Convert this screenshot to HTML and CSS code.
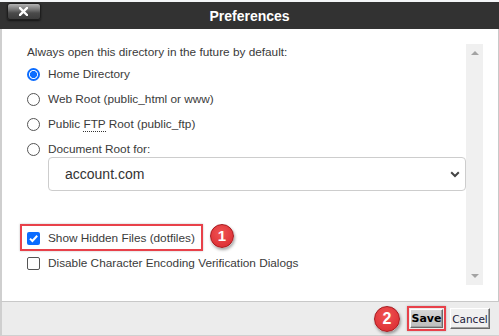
FILE: index.html
```html
<!DOCTYPE html>
<html>
<head>
<meta charset="utf-8">
<link rel="stylesheet" href="styles.css">
</head>
<body>
<div class="topstrip"></div>
<div class="dialog">
  <header class="titlebar">
    <div class="tb-left">
      <button class="close" aria-label="Close">
        <svg width="9" height="9" viewBox="0 0 9 9"><path d="M1 1 L8 8 M8 1 L1 8" stroke="#fff" stroke-width="2.4" stroke-linecap="square"/></svg>
      </button>
    </div>
    <h1 class="title">Preferences</h1>
    <div></div>
  </header>
  <div class="body">
    <div class="scroll">
      <p class="intro">Always open this directory in the future by default:</p>
      <label class="opt"><span class="radio checked"></span><span>Home Directory</span></label>
      <label class="opt"><span class="radio"></span><span>Web Root (public_html or www)</span></label>
      <label class="opt"><span class="radio"></span><span>Public <abbr class="ftp">FTP</abbr> Root (public_ftp)</span></label>
      <label class="opt"><span class="radio"></span><span>Document Root for:</span></label>
      <div class="select">
        <span>account.com</span>
        <svg class="chev" width="10" height="7" viewBox="0 0 10 7"><path d="M1.2 1.3 L5 5 L8.8 1.3" fill="none" stroke="#444" stroke-width="2"/></svg>
      </div>
      <label class="chk first">
        <span class="box checked">
          <svg width="13" height="13" viewBox="0 0 13 13"><path d="M3 6.6 L5.4 9 L10.2 3.8" fill="none" stroke="#fff" stroke-width="2"/></svg>
        </span><span>Show Hidden Files (dotfiles)</span>
        <span class="mark"></span>
        <span class="badge b1">1</span>
      </label>
      <label class="chk"><span class="box"></span><span>Disable Character Encoding Verification Dialogs</span></label>
    </div>
    <div class="scrollbar">
      <span class="arrow up"></span>
      <span class="arrow down"></span>
    </div>
  </div>
  <footer class="footer">
    <span class="badge b2">2</span>
    <span class="savewrap"><button class="btn save">Save</button></span>
    <button class="btn cancel">Cancel</button>
  </footer>
</div>
</body>
</html>
```

FILE: styles.css
```css
html, body {
  margin: 0;
  padding: 0;
  background: #fff;
}
body {
  width: 499px;
  height: 336px;
  overflow: hidden;
  font-family: "Liberation Sans", Arial, sans-serif;
}
.topstrip {
  height: 2px;
  background: #f4f6f8;
}
.dialog {
  width: 499px;
}
.titlebar {
  height: 27px;
  background: #323232;
  display: grid;
  grid-template-columns: 1fr auto 1fr;
  align-items: center;
}
.tb-left {
  align-self: start;
  padding-left: 7px;
  padding-top: 1px;
}
.close {
  width: 34px;
  height: 17px;
  padding: 0;
  border: 1px solid #1e1e1e;
  border-radius: 3px;
  background: linear-gradient(#b4b4b4 0%, #7a7a7a 35%, #4a4a4a 60%, #3c3c3c 100%);
  box-shadow: 0 1px 2px rgba(0,0,0,0.6);
  display: flex;
  align-items: center;
  justify-content: center;
}
.close svg { display: block; margin-left: -2px; margin-top: -1px; }
.title {
  margin: 0;
  color: #fff;
  font-size: 14px;
  font-weight: bold;
  line-height: 16px;
}
.body {
  height: 272px;
  box-sizing: border-box;
  border-left: 2px solid #cfcfcf;
  border-right: 1px solid #c8c8c8;
  padding: 15px 15px 16px 25px;
  display: flex;
}
.scroll {
  flex: 1;
  display: flex;
  flex-direction: column;
  align-items: flex-start;
  color: #3a3a3a;
  font-size: 11.8px;
}
.intro {
  margin: 0 0 6px;
  line-height: 16px;
}
.opt {
  display: flex;
  align-items: center;
  height: 16px;
  margin-bottom: 9px;
  line-height: 16px;
}
.radio {
  width: 13px;
  height: 13px;
  box-sizing: border-box;
  border: 1px solid #555;
  border-radius: 50%;
  margin-right: 8px;
  background: #fff;
}
.radio.checked {
  border: 2px solid #0b6cff;
  background: radial-gradient(circle, #0b6cff 0 3.3px, #fff 3.8px);
}
.ftp {
  text-decoration: none;
  border-bottom: 1px dotted #333;
  line-height: 12px;
}
.select {
  margin: -9px 0 0 21px;
  width: 418px;
  height: 34px;
  box-sizing: border-box;
  border: 1px solid #cdcdcd;
  border-radius: 4px;
  display: flex;
  align-items: center;
  justify-content: space-between;
  padding: 0 5px 0 16px;
  font-size: 14px;
  color: #333;
}
.chev { display: block; }
.chk {
  position: relative;
  display: flex;
  align-items: center;
  height: 16px;
  line-height: 16px;
  margin-top: 9px;
}
.chk.first { margin-top: 39px; }
.box {
  width: 13px;
  height: 13px;
  box-sizing: border-box;
  border: 1px solid #555;
  border-radius: 2px;
  margin-right: 8px;
  background: #fff;
}
.box.checked {
  border: none;
  background: #0b6cff;
}
.box svg { display: block; }
.mark {
  position: absolute;
  left: -7px;
  top: -6px;
  width: 183px;
  height: 27px;
  box-sizing: border-box;
  border: 2px solid #e8414a;
  box-shadow: 0 0 2px rgba(0,0,0,0.25);
}
.badge {
  display: flex;
  align-items: center;
  justify-content: center;
  box-sizing: border-box;
  border-radius: 50%;
  background: radial-gradient(circle at 45% 35%, #f05454, #d8262c);
  border: 1px solid #a51a1f;
  box-shadow: 1px 2px 3px rgba(0,0,0,0.35);
  color: #fff;
  font-family: "Liberation Sans", Arial, sans-serif;
  font-weight: bold;
}
.b1 {
  position: absolute;
  left: 183px;
  top: -6px;
  width: 24px;
  height: 24px;
  font-size: 15px;
}
.scrollbar {
  width: 17px;
  background: #f0f0f0;
  display: flex;
  flex-direction: column;
  justify-content: space-between;
  align-items: center;
  padding: 7px 0 7px;
  box-sizing: border-box;
}
.arrow {
  width: 0;
  height: 0;
  border-left: 4px solid transparent;
  border-right: 4px solid transparent;
}
.up { border-bottom: 4px solid #a3a3a3; }
.down { border-top: 4px solid #a3a3a3; }
.footer {
  height: 35px;
  box-sizing: border-box;
  background: #ececec;
  border-top: 1px solid #c8c8c8;
  border-left: 2px solid #cfcfcf;
  border-bottom: 1px solid #d0d0d0;
  display: flex;
  align-items: center;
  justify-content: flex-end;
  padding-right: 9px;
}
.b2 {
  width: 26px;
  height: 26px;
  font-size: 16px;
  margin-right: 7px;
}
.savewrap {
  display: flex;
  border: 2px solid #e8414a;
  padding: 1px;
  box-shadow: 0 0 2px rgba(0,0,0,0.25);
}
.btn {
  font-family: "DejaVu Sans", Verdana, sans-serif;
  font-size: 11px;
  color: #000;
  height: 19px;
  padding: 0;
  box-sizing: border-box;
  border: 1px solid;
  border-color: #fff #6a6a6a #6a6a6a #fff;
  box-shadow: inset -1px -1px 0 #a0a0a0;
  text-align: center;
}
.save {
  width: 33px;
  font-weight: bold;
  background: linear-gradient(#d6d6d6, #bdbdbd);
}
.cancel {
  margin-left: 4px;
  width: 40px;
  height: 21px;
  font-size: 10.5px;
  background: #f0f0f0;
  color: #1a1a3a;
}
```
